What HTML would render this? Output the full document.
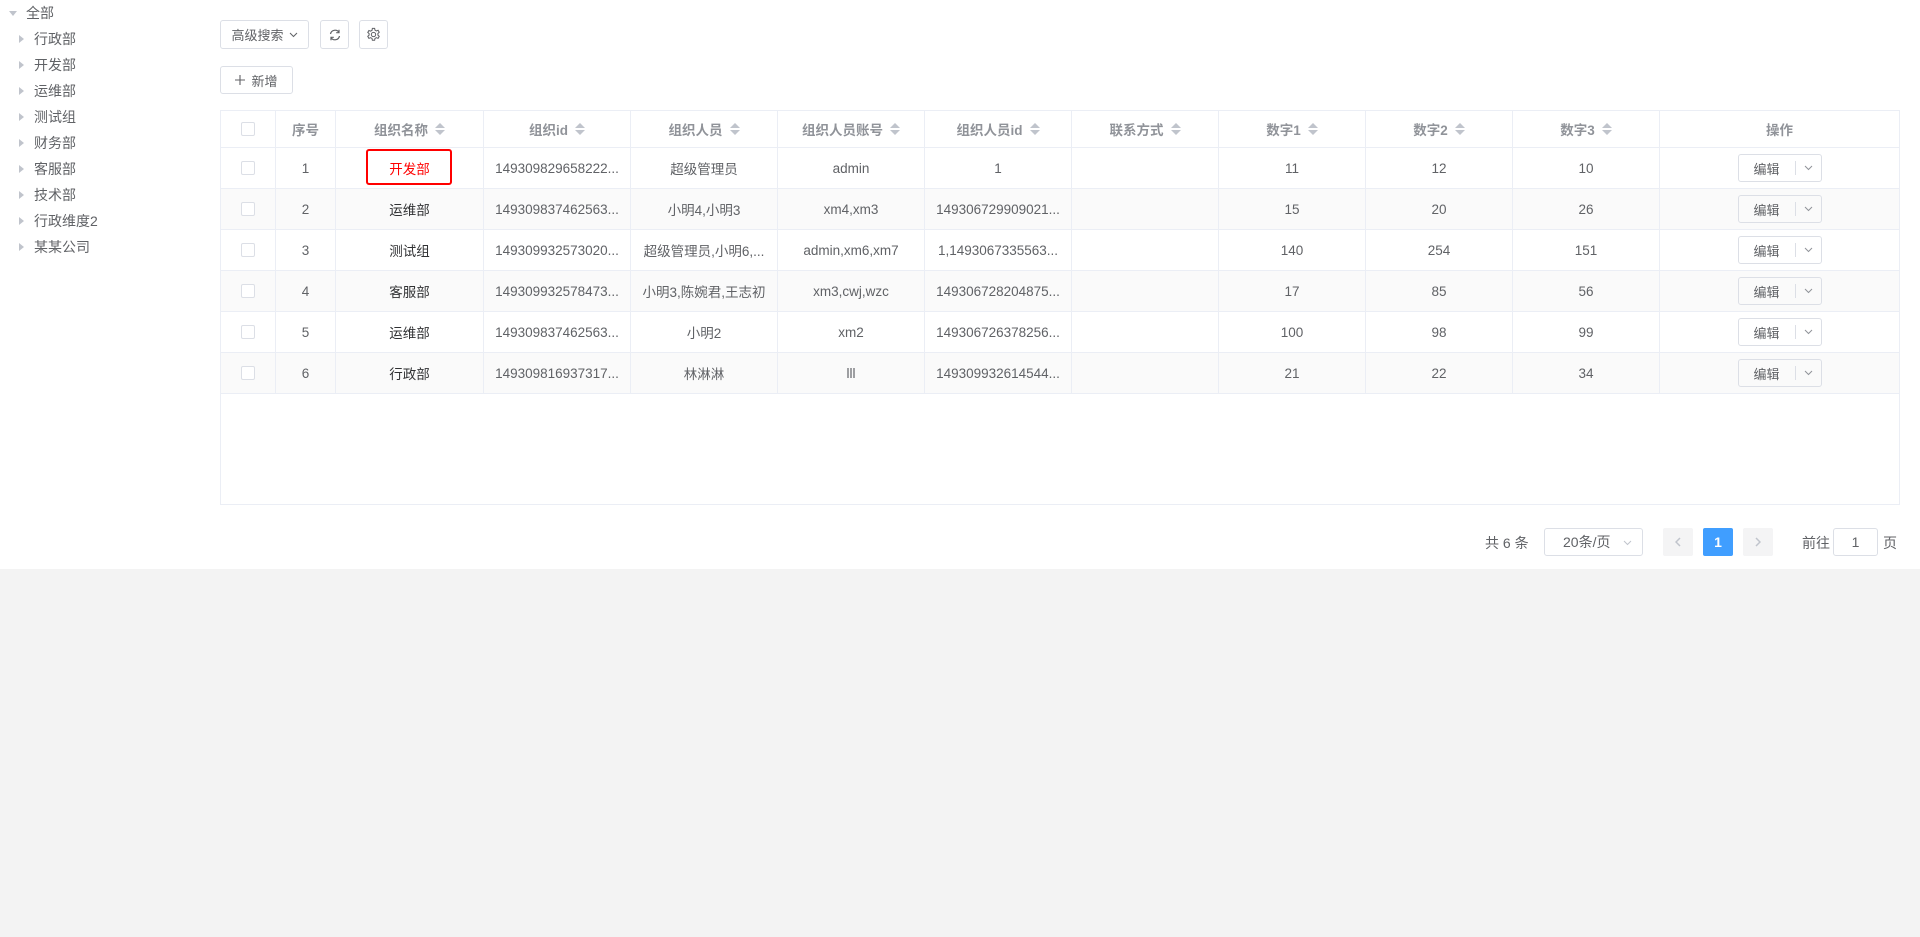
<!DOCTYPE html>
<html><head><meta charset="utf-8"><style>
*{box-sizing:border-box;margin:0;padding:0}
body{width:1920px;height:937px;background:#f3f3f3;font-family:"Liberation Sans","Noto Sans CJK SC",sans-serif;font-size:14px;color:#606266;position:relative;overflow:hidden}
.white{position:absolute;left:0;top:0;width:1920px;height:569px;background:#fff}
.abs{position:absolute}
.tree div{position:absolute;font-size:14px;color:#606266;height:20px;line-height:20px}
.tri{display:inline-block;width:0;height:0;border-top:4px solid transparent;border-bottom:4px solid transparent;border-left:5px solid #c0c4cc;margin-right:10px;vertical-align:1px}
.trid{display:inline-block;width:0;height:0;border-left:4px solid transparent;border-right:4px solid transparent;border-top:5px solid #c0c4cc;margin-right:9px;vertical-align:2px}
.btn{position:absolute;border:1px solid #dcdfe6;border-radius:3px;background:#fff;display:flex;align-items:center;justify-content:center;font-size:13px;color:#606266}
.table{position:absolute;left:220px;top:110px;width:1680px;height:395px;border:1px solid #ebeef5}
.row{position:absolute;left:0;width:1678px;display:flex;border-bottom:1px solid #ebeef5}
.row div.c{border-right:1px solid #ebeef5;display:flex;align-items:center;justify-content:center;white-space:nowrap;overflow:hidden;font-size:13.5px}
.row div.c:last-child{border-right:none}
.hd div.c{color:#909399;font-weight:bold}
.cb{width:14px;height:14px;border:1px solid #dcdfe6;border-radius:2px;background:#fff}
.sort{display:inline-block;margin-left:7px;position:relative;width:10px;height:14px;vertical-align:middle}
.sort:before{content:"";position:absolute;left:0;top:1px;border-left:5px solid transparent;border-right:5px solid transparent;border-bottom:5px solid #c0c4cc}
.sort:after{content:"";position:absolute;left:0;top:8px;border-left:5px solid transparent;border-right:5px solid transparent;border-top:5px solid #c0c4cc}
.edit{width:84px;height:28px;border:1px solid #dcdfe6;border-radius:3px;display:flex;align-items:center;font-size:13px;font-weight:normal;color:#606266}
.edit span.a{width:56px;text-align:center}
.edit span.s{width:1px;height:14px;background:#dcdfe6}
.edit span.b{flex:1;display:flex;justify-content:center}
</style></head><body>
<div class="white"></div>
<div class="tree">
<div style="left:9px;top:3px"><span class="trid"></span>全部</div>
<div style="left:19px;top:29px"><span class="tri"></span>行政部</div>
<div style="left:19px;top:55px"><span class="tri"></span>开发部</div>
<div style="left:19px;top:81px"><span class="tri"></span>运维部</div>
<div style="left:19px;top:107px"><span class="tri"></span>测试组</div>
<div style="left:19px;top:133px"><span class="tri"></span>财务部</div>
<div style="left:19px;top:159px"><span class="tri"></span>客服部</div>
<div style="left:19px;top:185px"><span class="tri"></span>技术部</div>
<div style="left:19px;top:211px"><span class="tri"></span>行政维度2</div>
<div style="left:19px;top:237px"><span class="tri"></span>某某公司</div>
</div>
<div class="btn" style="left:220px;top:20px;width:89px;height:29px">高级搜索<svg style="margin-left:5px" width="9" height="6" viewBox="0 0 9 6" fill="none" stroke="#606266" stroke-width="1"><path d="M1 1l3.5 3.5L8 1"/></svg></div>
<div class="btn" style="left:320px;top:20px;width:29px;height:29px"><svg width="14" height="14" viewBox="0 0 14 14" fill="none" stroke="#606266" stroke-width="1.2"><path d="M2.5 6A4.6 4.6 0 0 1 11 4.5M11.5 8A4.6 4.6 0 0 1 3 9.5"/><path d="M11 1.8V4.7H8.2M3 12.2V9.3H5.8"/></svg></div>
<div class="btn" style="left:359px;top:20px;width:29px;height:29px"><svg width="15" height="15" viewBox="0 0 16 16" fill="none" stroke="#606266" stroke-width="1.1"><path d="M6.8 1.5h2.4l.4 1.9 1.5.8 1.8-.7 1.2 2.1-1.4 1.3v1.8l1.4 1.3-1.2 2.1-1.8-.7-1.5.8-.4 1.9H6.8l-.4-1.9-1.5-.8-1.8.7-1.2-2.1 1.4-1.3V7.1L1.9 5.8l1.2-2.1 1.8.7 1.5-.8z"/><circle cx="8" cy="8" r="2.3"/></svg></div>
<div class="btn" style="left:220px;top:66px;width:73px;height:28px"><svg style="margin-right:6px" width="10" height="10" viewBox="0 0 10 10" stroke="#606266" stroke-width="1.1"><path d="M5 0v10M0 5h10"/></svg>新增</div>

<div class="table">
<div class="row hd" style="top:0;height:37px">
<div class="c" style="width:55px"><span class="cb"></span></div>
<div class="c" style="width:60px">序号</div>
<div class="c" style="width:148px">组织名称<span class="sort"></span></div>
<div class="c" style="width:147px">组织id<span class="sort"></span></div>
<div class="c" style="width:147px">组织人员<span class="sort"></span></div>
<div class="c" style="width:147px">组织人员账号<span class="sort"></span></div>
<div class="c" style="width:147px">组织人员id<span class="sort"></span></div>
<div class="c" style="width:147px">联系方式<span class="sort"></span></div>
<div class="c" style="width:147px">数字1<span class="sort"></span></div>
<div class="c" style="width:147px">数字2<span class="sort"></span></div>
<div class="c" style="width:147px">数字3<span class="sort"></span></div>
<div class="c" style="flex:1">操作</div>
</div>
</div>
<div class="abs" style="left:366px;top:149px;width:86px;height:36px;border:2px solid #f00;border-radius:3px;z-index:5"></div>
<script>
var d=[["1","开发部","149309829658222...","超级管理员","admin","1","11","12","10"],
["2","运维部","149309837462563...","小明4,小明3","xm4,xm3","149306729909021...","15","20","26"],
["3","测试组","149309932573020...","超级管理员,小明6,...","admin,xm6,xm7","1,1493067335563...","140","254","151"],
["4","客服部","149309932578473...","小明3,陈婉君,王志初","xm3,cwj,wzc","149306728204875...","17","85","56"],
["5","运维部","149309837462563...","小明2","xm2","149306726378256...","100","98","99"],
["6","行政部","149309816937317...","林淋淋","lll","149309932614544...","21","22","34"]];
var chev='<svg width="9" height="6" viewBox="0 0 9 6" fill="none" stroke="#909399" stroke-width="1"><path d="M1 1l3.5 3.5L8 1"/></svg>';
var h="";d.forEach(function(r,i){h+='<div class="row" style="top:'+(37+i*41)+'px;height:41px;background:'+(i%2?'#fafafa':'#fff')+'">'+
'<div class="c" style="width:55px"><span class="cb"></span></div><div class="c" style="width:60px">'+r[0]+'</div>'+
'<div class="c" style="width:148px;color:'+(i==0?'#f00':'#303133')+'">'+r[1]+'</div>'+
'<div class="c" style="width:147px">'+r[2]+'</div><div class="c" style="width:147px">'+r[3]+'</div><div class="c" style="width:147px">'+r[4]+'</div><div class="c" style="width:147px">'+r[5]+'</div><div class="c" style="width:147px"></div><div class="c" style="width:147px">'+r[6]+'</div><div class="c" style="width:147px">'+r[7]+'</div><div class="c" style="width:147px">'+r[8]+'</div>'+
'<div class="c" style="flex:1"><div class="edit"><span class="a">编辑</span><span class="s"></span><span class="b">'+chev+'</span></div></div></div>';});
document.querySelector('.table').insertAdjacentHTML('beforeend',h);
</script>
<div class="abs" style="left:1485px;top:533px;font-size:14px">共 6 条</div>
<div class="btn" style="left:1544px;top:528px;width:99px;height:28px;justify-content:flex-start;padding-left:18px;font-size:14px">20条/页<svg style="position:absolute;right:10px;top:11px" width="9" height="6" viewBox="0 0 9 6" fill="none" stroke="#c0c4cc" stroke-width="1"><path d="M1 1l3.5 3.5L8 1"/></svg></div>
<div class="abs" style="left:1663px;top:528px;width:30px;height:28px;background:#f4f4f5;border-radius:2px;display:flex;align-items:center;justify-content:center"><svg width="6" height="10" viewBox="0 0 6 10" fill="none" stroke="#c0c4cc" stroke-width="1.5"><path d="M5 1L1 5l4 4"/></svg></div>
<div class="abs" style="left:1703px;top:528px;width:30px;height:28px;background:#409eff;border-radius:2px;text-align:center;line-height:28px;color:#fff;font-weight:bold">1</div>
<div class="abs" style="left:1743px;top:528px;width:30px;height:28px;background:#f4f4f5;border-radius:2px;display:flex;align-items:center;justify-content:center"><svg width="6" height="10" viewBox="0 0 6 10" fill="none" stroke="#c0c4cc" stroke-width="1.5"><path d="M1 1l4 4-4 4"/></svg></div>
<div class="abs" style="left:1802px;top:533px">前往</div>
<div class="btn" style="left:1833px;top:528px;width:45px;height:28px;font-size:14px">1</div>
<div class="abs" style="left:1883px;top:533px">页</div>
</body></html>
